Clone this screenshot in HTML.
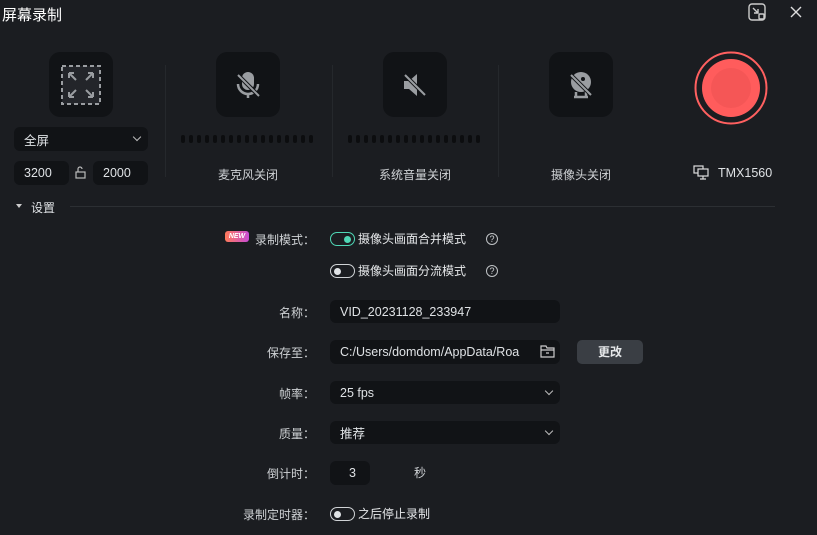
<!DOCTYPE html>
<html><head><meta charset="utf-8"><style>
*{margin:0;padding:0;box-sizing:border-box}
body{width:817px;height:535px;background:#1b1d21;color:#e6e8ea;font-family:"Liberation Sans","Noto Sans CJK SC",sans-serif;font-size:12px;position:relative;overflow:hidden}
.a{position:absolute}
.box{position:absolute;width:64px;height:65px;background:#111316;border-radius:11px;display:flex;align-items:center;justify-content:center}
.inp{position:absolute;background:#111316;border-radius:6px;display:flex;align-items:center;padding-left:10px;color:#dfe2e5;font-size:12.5px}
.lbl{position:absolute;right:502px;color:#cfd2d5;text-align:right;font-family:"Noto Sans CJK SC",sans-serif;line-height:16px;margin-top:2px}
.dots{position:absolute;height:8px;display:flex;gap:3.6px}
.dots i{display:block;width:4.4px;height:8px;border-radius:2px;background:#0c0d0f}
.vl{position:absolute;width:1px;background:#25282c;top:65px;height:112px}
.tg{position:absolute;width:25px;height:14px;border-radius:7px;border:1.3px solid #d0d3d6}
.tg b{position:absolute;top:2.5px;width:7px;height:7px;border-radius:50%;background:#e0e3e6}
.q{position:absolute;width:12px;height:12px;border:1px solid #bfc2c5;border-radius:50%;font-size:9px;line-height:10px;text-align:center;color:#cfd2d5}
.chev{position:absolute;right:8px;top:7px;width:6px;height:6px;border-right:1.3px solid #bbb;border-bottom:1.3px solid #bbb;transform:rotate(45deg)}
</style></head><body>
<div class="a" style="left:2px;top:4px;font-size:15px;color:#fff">屏幕录制</div>
<svg class="a" style="left:747px;top:2px" width="20" height="20" viewBox="0 0 20 20" fill="none" stroke="#ccc" stroke-width="1.4"><rect x="2" y="2" width="16" height="16" rx="3"/><path d="M6 6l5 5M11 7v4H7"/><rect x="12" y="12" width="5" height="5" rx="1" fill="#1b1d21"/></svg>
<svg class="a" style="left:790px;top:6px" width="12" height="12" viewBox="0 0 12 12" stroke="#ddd" stroke-width="1.4"><path d="M1 1l10 10M11 1L1 11"/></svg>

<div class="box" style="left:49px;top:52px"><svg width="42" height="42" viewBox="0 0 42 42" fill="none" stroke="#9a9da1" stroke-width="2"><rect x="2" y="2" width="38" height="38" stroke-dasharray="4 3" fill="#23252a"/><path d="M9 9l7 7M9 9v5M9 9h5M33 9l-7 7M33 9v5M33 9h-5M9 33l7-7M9 33v-5M9 33h5M33 33l-7-7M33 33v-5M33 33h-5"/></svg></div>
<div class="inp" style="left:14px;top:127px;width:134px;height:24px">全屏<span class="chev"></span></div>
<div class="inp" style="left:14px;top:161px;width:55px;height:24px">3200</div>
<svg class="a" style="left:74px;top:166px" width="13" height="13" viewBox="0 0 13 13" fill="none" stroke="#bbb" stroke-width="1.2"><rect x="2" y="6" width="9" height="6"/><path d="M4 6V3a2 2 0 0 1 4 0"/></svg>
<div class="inp" style="left:93px;top:161px;width:55px;height:24px">2000</div>

<div class="vl" style="left:165px"></div><div class="vl" style="left:332px"></div><div class="vl" style="left:498px"></div>

<div class="box" style="left:216px;top:52px"><svg width="32" height="32" viewBox="0 0 32 32"><rect x="10" y="3" width="12" height="18" rx="6" fill="#9a9da1"/><path d="M6 15a10 10 0 0 0 20 0M16 25v4" stroke="#9a9da1" stroke-width="2.5" fill="none"/><path d="M5 5l22 22" stroke="#111316" stroke-width="4"/><path d="M6 6l21 21" stroke="#9a9da1" stroke-width="2"/></svg></div>
<div class="dots" style="left:181px;top:135px"><i></i><i></i><i></i><i></i><i></i><i></i><i></i><i></i><i></i><i></i><i></i><i></i><i></i><i></i><i></i><i></i><i></i></div>
<div class="a" style="left:208px;top:166px;width:80px;text-align:center;color:#cfd2d5">麦克风关闭</div>

<div class="box" style="left:383px;top:52px"><svg width="32" height="32" viewBox="0 0 32 32"><path d="M5 12h5l8-7v22l-8-7H5z" fill="#9a9da1"/><path d="M5 5l22 22" stroke="#111316" stroke-width="4"/><path d="M6 6l20 20" stroke="#9a9da1" stroke-width="2"/></svg></div>
<div class="dots" style="left:348px;top:135px"><i></i><i></i><i></i><i></i><i></i><i></i><i></i><i></i><i></i><i></i><i></i><i></i><i></i><i></i><i></i><i></i><i></i></div>
<div class="a" style="left:365px;top:166px;width:100px;text-align:center;color:#cfd2d5">系统音量关闭</div>

<div class="box" style="left:549px;top:52px"><svg width="32" height="32" viewBox="0 0 32 32"><circle cx="16" cy="13" r="10" fill="#9a9da1"/><circle cx="18" cy="10" r="2" fill="#111316"/><path d="M9 28h14M11 23v5M21 23v5" stroke="#9a9da1" stroke-width="2.5"/><path d="M5 5l22 22" stroke="#111316" stroke-width="4"/><path d="M6 6l20 20" stroke="#9a9da1" stroke-width="2"/></svg></div>
<div class="a" style="left:531px;top:166px;width:100px;text-align:center;color:#cfd2d5">摄像头关闭</div>

<svg class="a" style="left:694px;top:51px" width="74" height="74" viewBox="0 0 74 74"><circle cx="37" cy="37" r="35.5" fill="none" stroke="#ff6060" stroke-width="2"/><circle cx="37" cy="37" r="29" fill="#ff5c5c"/><circle cx="37" cy="37" r="20" fill="#f55656"/></svg>
<svg class="a" style="left:693px;top:165px" width="16" height="15" viewBox="0 0 16 15" fill="none" stroke="#ddd" stroke-width="1.2"><rect x="1" y="1" width="9" height="7"/><rect x="5" y="4" width="10" height="7" fill="#1b1d21"/><path d="M10 11v3M7 14h6"/></svg>
<div class="a" style="left:718px;top:166px;color:#dfe2e5;font-size:12.5px">TMX1560</div>

<div class="a" style="left:16px;top:204px;width:0;height:0;border-left:3px solid transparent;border-right:3px solid transparent;border-top:4px solid #ccc"></div>
<div class="a" style="left:31px;top:199px;color:#dfe2e5">设置</div>
<div class="a" style="left:70px;top:206px;width:705px;height:1px;background:#2c2f33"></div>

<div class="a" style="left:225px;top:231px;width:24px;height:11px;border-radius:3px;background:linear-gradient(90deg,#ff7a5a,#c84bd6);font-size:7px;font-weight:bold;font-style:italic;color:#fff;text-align:center;line-height:11px">NEW</div>
<div class="lbl" style="top:230px">录制模式：</div>
<div class="tg" style="left:330px;top:232px;border-color:#4fd6b5"><b style="left:13px;background:#4fd6b5"></b></div>
<div class="a" style="left:358px;top:230px">摄像头画面合并模式</div>
<div class="q" style="left:486px;top:233px">?</div>
<div class="tg" style="left:330px;top:264px"><b style="left:2.5px"></b></div>
<div class="a" style="left:358px;top:262px">摄像头画面分流模式</div>
<div class="q" style="left:486px;top:265px">?</div>

<div class="lbl" style="top:303px">名称：</div>
<div class="inp" style="left:330px;top:300px;width:230px;height:23px">VID_20231128_233947</div>
<div class="lbl" style="top:343px">保存至：</div>
<div class="inp" style="left:330px;top:340px;width:230px;height:24px">C:/Users/domdom/AppData/Roa</div>
<svg class="a" style="left:540px;top:344px" width="15" height="14" viewBox="0 0 15 14" fill="none" stroke="#ccc" stroke-width="1.2"><path d="M1 2h5l1 2h7v9H1z"/><path d="M1 6h13M6 9h3"/></svg>
<div class="a" style="left:577px;top:340px;width:66px;height:24px;background:#3a3e44;border-radius:5px;text-align:center;line-height:24px;font-weight:bold;color:#e6e8ea">更改</div>
<div class="lbl" style="top:384px">帧率：</div>
<div class="inp" style="left:330px;top:381px;width:230px;height:23px">25 fps<span class="chev"></span></div>
<div class="lbl" style="top:424px">质量：</div>
<div class="inp" style="left:330px;top:421px;width:230px;height:23px">推荐<span class="chev"></span></div>
<div class="lbl" style="top:464px">倒计时：</div>
<div class="inp" style="left:330px;top:461px;width:40px;height:24px;padding-left:19px">3</div>
<div class="a" style="left:414px;top:464px;color:#cfd2d5">秒</div>
<div class="lbl" style="top:505px">录制定时器：</div>
<div class="tg" style="left:330px;top:507px"><b style="left:2.5px"></b></div>
<div class="a" style="left:358px;top:505px">之后停止录制</div>
</body></html>
